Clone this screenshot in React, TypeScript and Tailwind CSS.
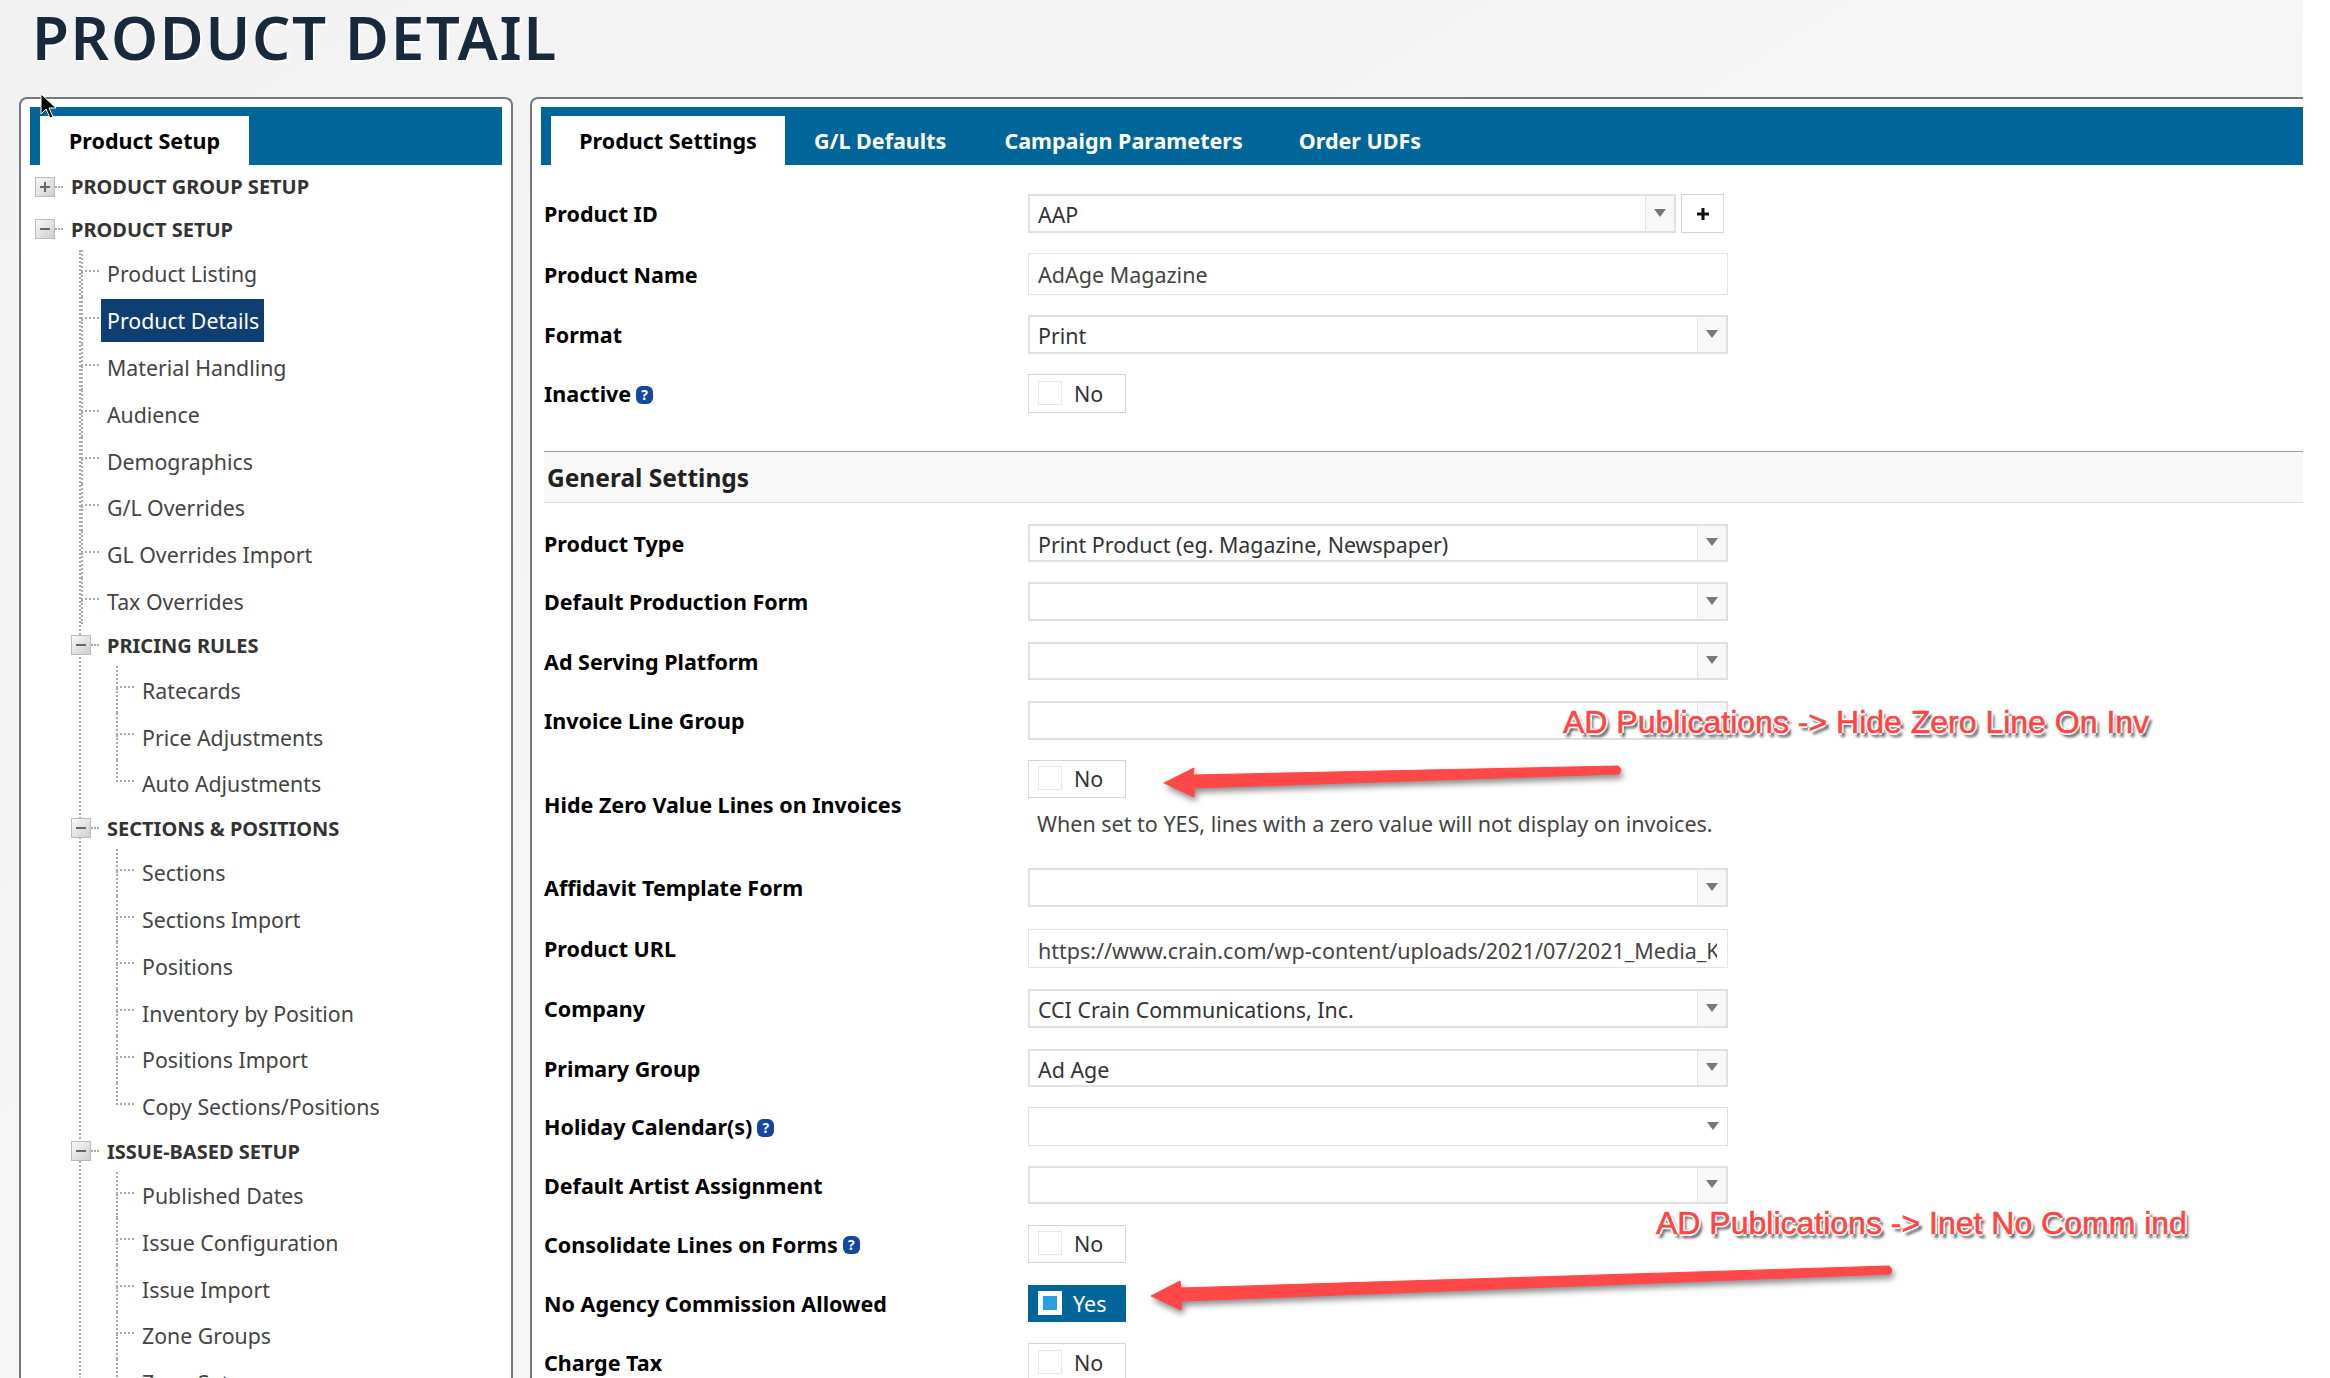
import React from "react";

const sans = "font-['Noto_Sans','Open_Sans',sans-serif]";

function PlusMinus({ open, className = "" }: { open: boolean; className?: string }) {
  return (
    <span className={`flex h-[20px] w-[20px] flex-none items-center justify-center border border-[#bbbbbb] bg-gradient-to-br from-[#f8f8f8] to-[#cfcfcf] ${className}`}>
      <svg width="14" height="14" viewBox="0 0 14 14">
        <path d={open ? "M2 7h10" : "M2 7h10M7 2v10"} stroke="#666" strokeWidth="2" />
      </svg>
    </span>
  );
}

function Connector({ last }: { last?: boolean }) {
  return (
    <span className="flex h-full w-[18px] flex-none flex-col">
      <span className="h-[47%] border-b-2 border-l-2 border-dotted border-[#aaa]" />
      <span className={last ? "flex-1" : "flex-1 border-l-2 border-dotted border-[#aaa]"} />
    </span>
  );
}

function Leaf({ text, last, active }: { text: string; last?: boolean; active?: boolean }) {
  return (
    <li className="flex h-[46.8px] items-center">
      <Connector last={last} />
      <span className={active ? "ml-[2px] flex h-[43px] items-center bg-[#0f3f72] pl-[6px] pr-[5px] pt-[2px] text-white" : "ml-[8px] pt-[2px] text-[#444]"}>{text}</span>
    </li>
  );
}

function Section({ title, items }: { title: string; items: string[] }) {
  return (
    <li>
      <div className="-ml-[10px] flex h-[42px] items-center">
        <PlusMinus open />
        <span className="w-[8px] flex-none border-t-2 border-dotted border-[#aaa]" />
        <span className="ml-[8px] pt-[2px] text-[20px] font-bold text-[#333]">{title}</span>
      </div>
      <ul className="ml-[35px]">
        {items.map((t, i) => (
          <Leaf key={t} text={t} last={i === items.length - 1} />
        ))}
      </ul>
    </li>
  );
}

function Tree() {
  return (
    <div className={`text-[21.3px] ${sans}`}>
      <div className="flex h-[43px] items-center pl-[5px]">
        <PlusMinus open={false} />
        <span className="w-[8px] flex-none border-t-2 border-dotted border-[#aaa]" />
        <span className="ml-[8px] pt-[1px] text-[20px] font-bold text-[#333]">PRODUCT GROUP SETUP</span>
      </div>
      <div className="flex h-[42px] items-center pl-[5px]">
        <PlusMinus open />
        <span className="w-[8px] flex-none border-t-2 border-dotted border-[#aaa]" />
        <span className="ml-[8px] pt-[2px] text-[20px] font-bold text-[#333]">PRODUCT SETUP</span>
      </div>
      <ul className="ml-[49px] border-l-2 border-dotted border-[#aaa]">
        <Leaf text="Product Listing" />
        <Leaf text="Product Details" active />
        {["Material Handling", "Audience", "Demographics", "G/L Overrides", "GL Overrides Import", "Tax Overrides"].map((t) => (
          <Leaf key={t} text={t} />
        ))}
        <Section title="PRICING RULES" items={["Ratecards", "Price Adjustments", "Auto Adjustments"]} />
        <Section title="SECTIONS & POSITIONS" items={["Sections", "Sections Import", "Positions", "Inventory by Position", "Positions Import", "Copy Sections/Positions"]} />
        <Section title="ISSUE-BASED SETUP" items={["Published Dates", "Issue Configuration", "Issue Import", "Zone Groups", "Zone Sets"]} />
      </ul>
    </div>
  );
}

function Caret() {
  return (
    <svg width="12" height="8" viewBox="0 0 12 8">
      <path d="M0 0h12L6 8z" fill="#777" />
    </svg>
  );
}

function Combo({ value, plain, width = "w-[700px]" }: { value?: string; plain?: boolean; width?: string }) {
  return (
    <div className={`flex h-full ${width} border-[#e0e0e0] ${plain ? "border" : "border-2"}`}>
      <div className="flex-1 overflow-hidden whitespace-nowrap pl-[8px] pt-[1px] text-[21.4px] leading-[35px] text-[#333]">{value}</div>
      <div className={`flex w-[29px] flex-none items-center justify-center pb-[2px] ${plain ? "" : "border-l border-[#e4e4e4] bg-[#f8f8f8]"}`}>
        <Caret />
      </div>
    </div>
  );
}

function TextBox({ value }: { value: string }) {
  return (
    <div className="h-full w-[700px] border border-[#e4e4e4] pl-[9px] pr-[10px] pt-[1px] text-[21.5px] leading-[40px] text-[#444]">
      <div className="overflow-hidden whitespace-nowrap">{value}</div>
    </div>
  );
}

function Toggle({ on }: { on?: boolean }) {
  return (
    <div className={`flex h-full w-[98px] items-center text-[21.5px] ${on ? "bg-[#006699] pl-[10px] text-white" : "border border-[#d4d4d4] pl-[9px] text-[#333]"}`}>
      <span className={`mb-[2px] flex h-[24px] w-[24px] flex-none items-center justify-center ${on ? "bg-white" : "border border-[#e6e6e6]"}`}>
        {on && <span className="h-[14px] w-[14px] bg-[#2a9fe0]" />}
      </span>
      <span className={on ? "ml-[11px] pt-[1px]" : "ml-[12px] pt-[1px]"}>{on ? "Yes" : "No"}</span>
    </div>
  );
}

function Help() {
  return (
    <span className="ml-[5px] inline-flex h-[18px] w-[17px] items-center justify-center rounded-[6px] bg-[#1347a0] text-[14px] font-bold leading-none text-white">?</span>
  );
}

function Row({ label, help, mt, h, children }: { label: string; help?: boolean; mt: string; h: string; children: React.ReactNode }) {
  return (
    <div className={`flex items-center ${mt} ${h}`}>
      <div className="flex w-[484px] flex-none items-center pt-[2px] text-[21.5px] font-bold text-black">
        {label}
        {help && <Help />}
      </div>
      {children}
    </div>
  );
}

function Annotation({ text, className }: { text: string; className: string }) {
  return (
    <div className={`absolute whitespace-nowrap font-['Liberation_Sans',sans-serif] text-[32px] leading-none text-[#ff4444] [-webkit-text-stroke:0.6px_#ff4444] [text-shadow:-2px_0_0_#fff,2px_0_0_#fff,0_-2px_0_#fff,0_2px_0_#fff,3px_4px_3px_#444] ${className}`}>
      {text}
    </div>
  );
}

function Arrow({ className, w, h, d }: { className: string; w: number; h: number; d: string }) {
  return (
    <svg className={`absolute drop-shadow-[2px_4px_3px_rgba(0,0,0,0.45)] ${className}`} width={w} height={h} viewBox={`0 0 ${w} ${h}`}>
      <path d={d} fill="#ff4848" stroke="#ff4848" strokeWidth="1" strokeLinejoin="round" />
    </svg>
  );
}

export default function App() {
  return (
    <div className={`h-[1378px] w-[2330px] overflow-hidden bg-white ${sans}`}>
      <div className="relative h-[1378px] w-[2303px] overflow-hidden bg-gradient-to-br from-[#f2f2f2] via-[#f6f6f6] to-[#f4f4f4]">
        <h1 className="h-[97px] pl-[32px] text-[60px] font-semibold leading-[75px] tracking-[1.7px] text-[#19293c] [text-shadow:2px_2px_0_#fff]">PRODUCT DETAIL</h1>
        <div className="flex gap-[17px] pl-[19px]">
          <aside className="h-[1400px] w-[494px] flex-none rounded-t-[8px] border-2 border-b-0 border-[#777] bg-white px-[9px] pt-[8px]">
            <div className="flex h-[58px] items-end bg-[#006699] pl-[10px]">
              <div className="flex h-[49px] w-[209px] items-center justify-center bg-white pt-[2px] text-[21.5px] font-bold text-black">Product Setup</div>
            </div>
            <Tree />
          </aside>
          <main className="h-[1400px] w-[1790px] flex-none rounded-tl-[8px] border-2 border-b-0 border-[#777] bg-white pl-[9px] pt-[8px]">
            <div className="flex h-[58px] items-end gap-[29px] bg-[#006699] pl-[10px] text-[21.5px] font-bold text-white">
              <div className="flex h-[49px] w-[234px] items-center justify-center bg-white pt-[2px] text-black">Product Settings</div>
              <div className="flex h-[49px] items-center pt-[2px]">G/L Defaults</div>
              <div className="flex h-[49px] items-center pl-[29px] pt-[2px]">Campaign Parameters</div>
              <div className="flex h-[49px] items-center pl-[27px] pt-[2px]">Order UDFs</div>
            </div>
            <div className="pl-[3px]">
              <Row label="Product ID" mt="mt-[29px]" h="h-[39px]">
                <Combo value="AAP" width="w-[648px]" />
                <div className="ml-[5px] flex h-full w-[43px] items-center justify-center border border-[#d4d4d4]">
                  <svg width="16" height="16" viewBox="0 0 16 16"><path d="M8 2v12M2 8h12" stroke="#111" strokeWidth="3" /></svg>
                </div>
              </Row>
              <Row label="Product Name" mt="mt-[20px]" h="h-[42px]"><TextBox value="AdAge Magazine" /></Row>
              <Row label="Format" mt="mt-[20px]" h="h-[39px]"><Combo value="Print" /></Row>
              <Row label="Inactive" help mt="mt-[20px]" h="h-[39px]"><Toggle /></Row>
              <div className="mt-[38px] flex h-[52px] items-center border-y border-t-[#999] border-b-[#ddd] bg-[#f8f8f8] pl-[3px] pt-[2px] text-[24.5px] font-bold text-[#222]">General Settings</div>
              <Row label="Product Type" mt="mt-[21px]" h="h-[38px]"><Combo value="Print Product (eg. Magazine, Newspaper)" /></Row>
              <Row label="Default Production Form" mt="mt-[20px]" h="h-[39px]"><Combo /></Row>
              <Row label="Ad Serving Platform" mt="mt-[21px]" h="h-[38px]"><Combo /></Row>
              <Row label="Invoice Line Group" mt="mt-[21px]" h="h-[39px]"><Combo /></Row>
              <Row label="Hide Zero Value Lines on Invoices" mt="mt-[20px]" h="h-[88px]">
                <div className="flex h-full flex-col">
                  <div className="h-[38px]"><Toggle /></div>
                  <div className="mt-[10px] pl-[9px] text-[21.5px] text-[#444]">When set to YES, lines with a zero value will not display on invoices.</div>
                </div>
              </Row>
              <Row label="Affidavit Template Form" mt="mt-[20px]" h="h-[39px]"><Combo /></Row>
              <Row label="Product URL" mt="mt-[22px]" h="h-[39px]"><TextBox value="https://www.crain.com/wp-content/uploads/2021/07/2021_Media_Kit.pdf" /></Row>
              <Row label="Company" mt="mt-[21px]" h="h-[39px]"><Combo value="CCI Crain Communications, Inc." /></Row>
              <Row label="Primary Group" mt="mt-[21px]" h="h-[38px]"><Combo value="Ad Age" /></Row>
              <Row label="Holiday Calendar(s)" help mt="mt-[20px]" h="h-[39px]"><Combo plain /></Row>
              <Row label="Default Artist Assignment" mt="mt-[20px]" h="h-[38px]"><Combo /></Row>
              <Row label="Consolidate Lines on Forms" help mt="mt-[21px]" h="h-[38px]"><Toggle /></Row>
              <Row label="No Agency Commission Allowed" mt="mt-[22px]" h="h-[37px]"><Toggle on /></Row>
              <Row label="Charge Tax" mt="mt-[21px]" h="h-[39px]"><Toggle /></Row>
            </div>
          </main>
        </div>

        <Annotation text="AD Publications -> Hide Zero Line On Inv" className="left-[1563px] top-[706px]" />
        <Annotation text="AD Publications -> Inet No Comm ind" className="left-[1656px] top-[1207px]" />
        <Arrow className="left-[1160px] top-[760px]" w={470} h={42} d="M4 23 L34 8 L33 15 L458 6 Q463 9 459 14 L34 28 L34 37 Z" />
        <Arrow className="left-[1148px] top-[1258px]" w={754} h={56} d="M3 38 L32 23 L33 30 L741 8 Q746 12 742 16 L34 43 L33 52 Z" />

        <svg className="absolute left-[40px] top-[93px]" width="20" height="28" viewBox="0 0 20 28">
          <path d="M1 1v20l5-5 4 9 3-1-4-9h7z" fill="#000" stroke="#fff" strokeWidth="1" />
        </svg>
      </div>
    </div>
  );
}
